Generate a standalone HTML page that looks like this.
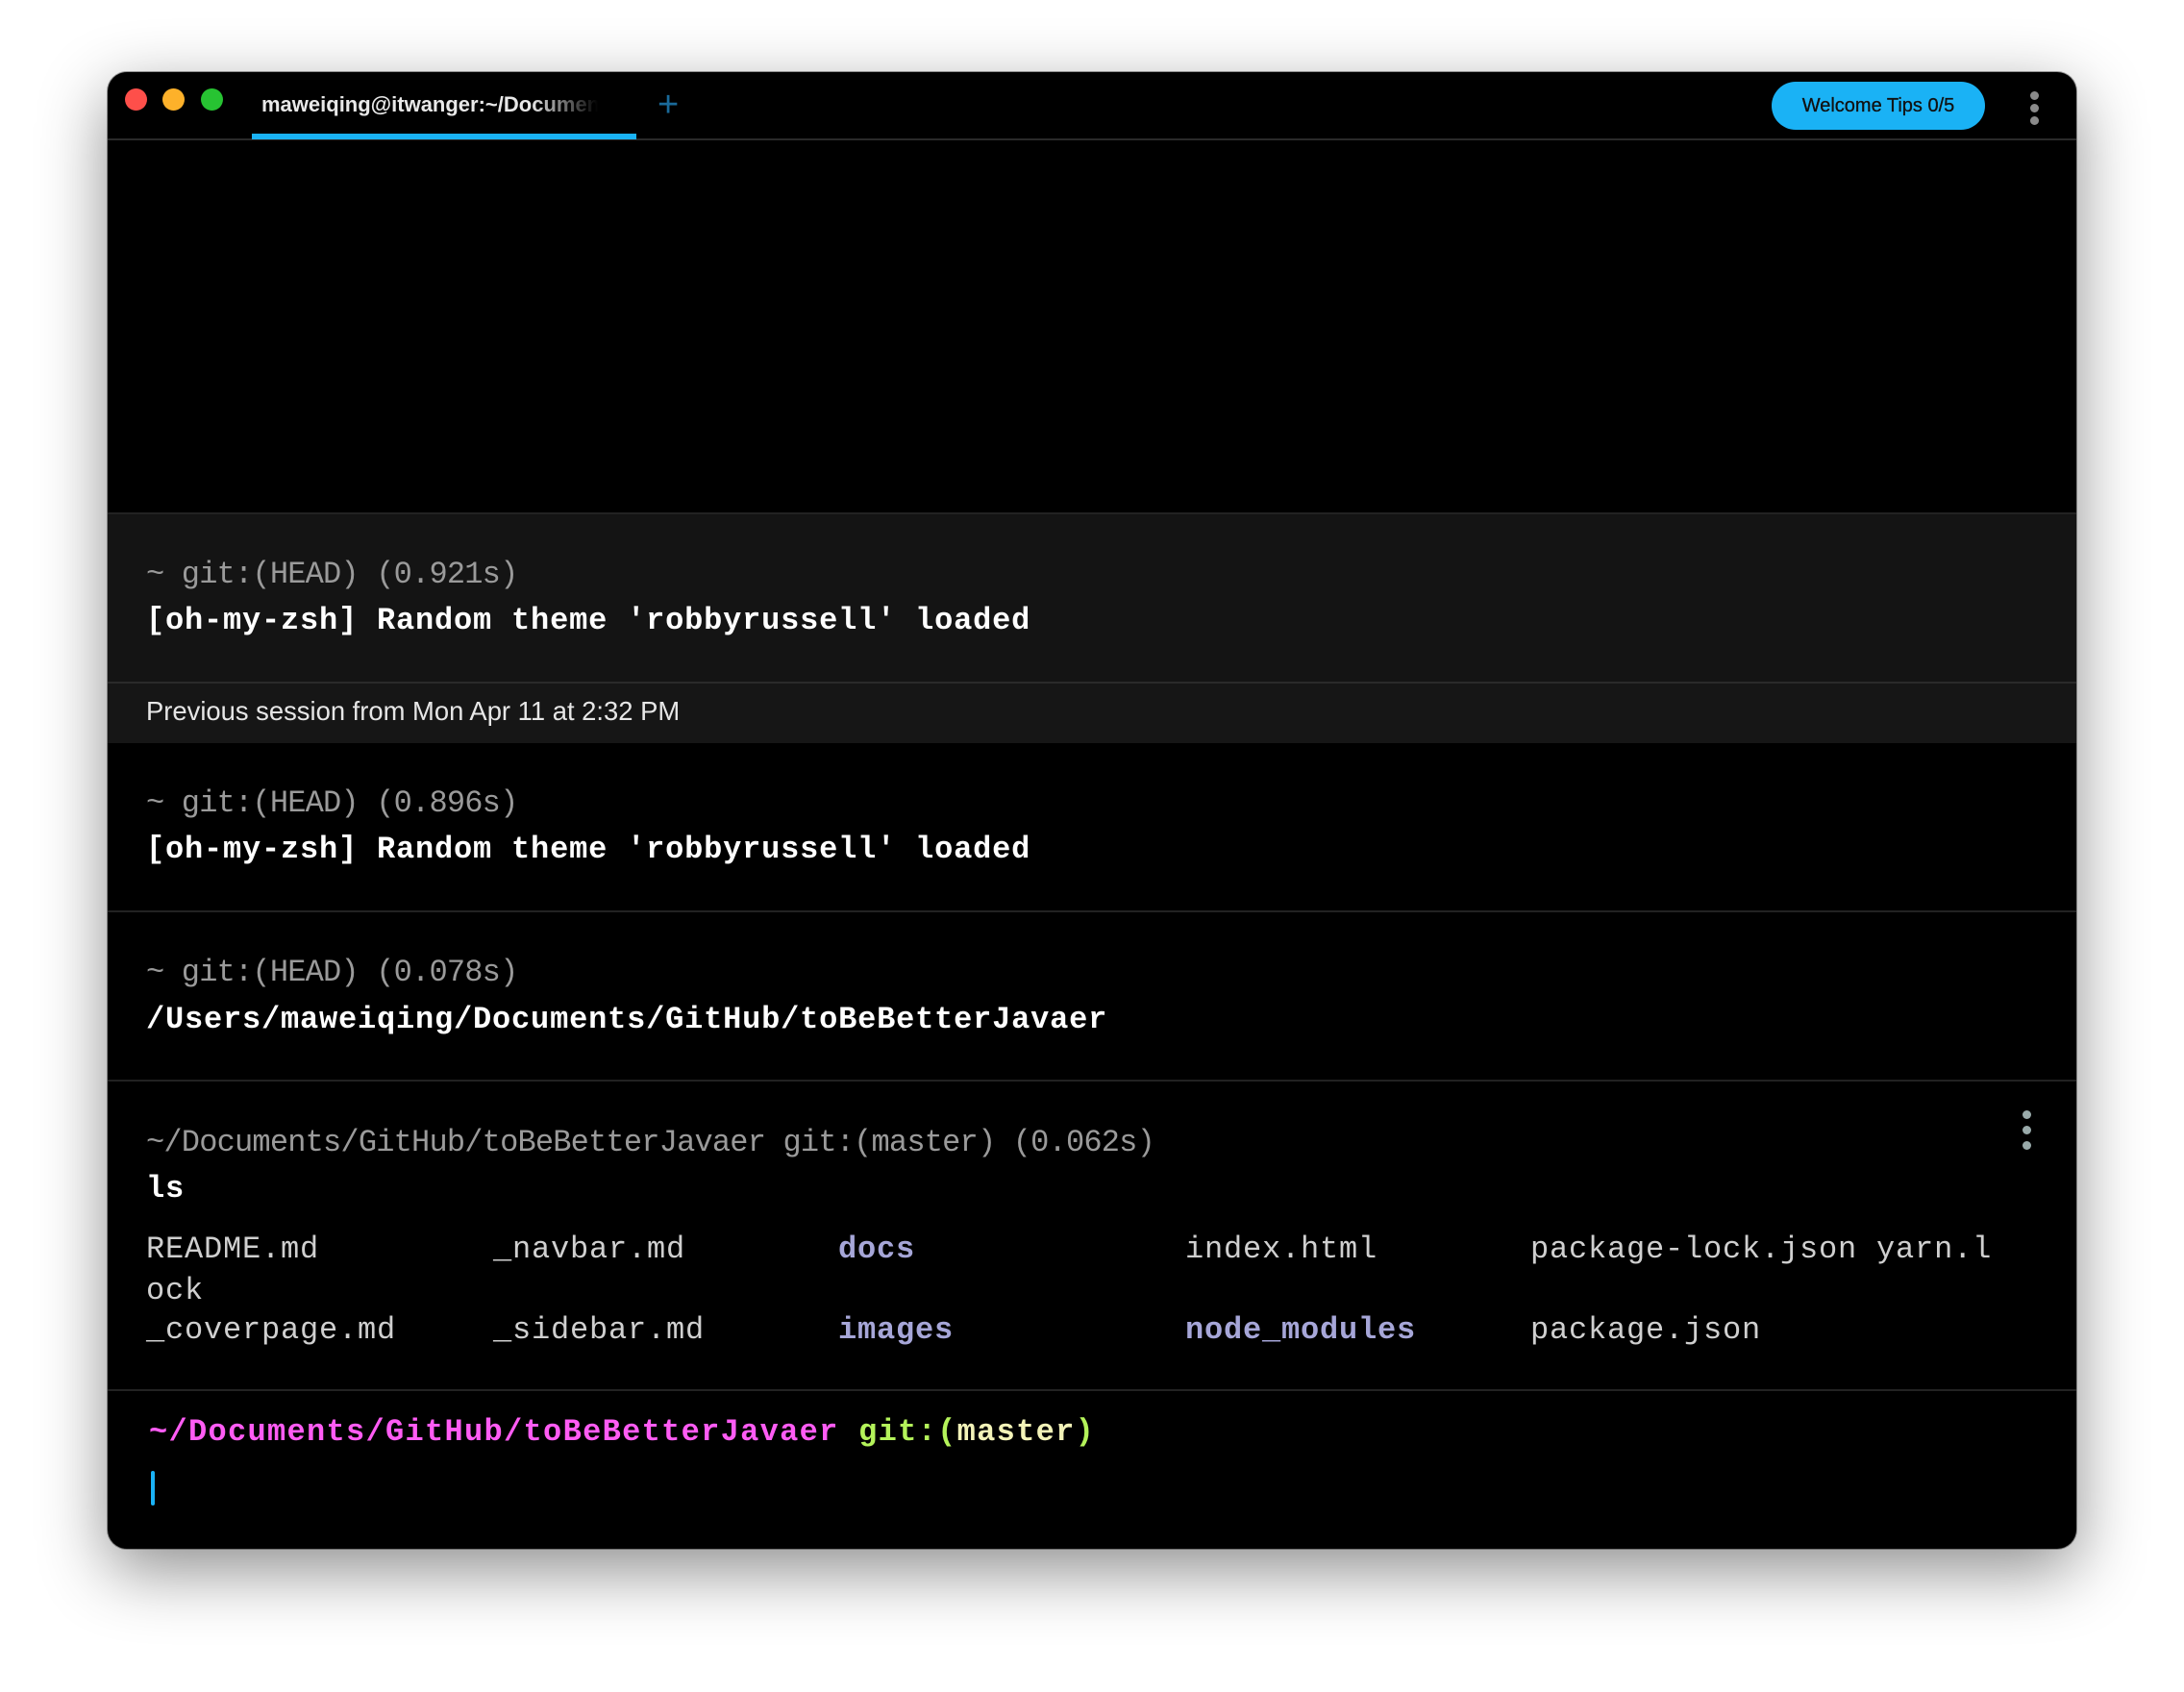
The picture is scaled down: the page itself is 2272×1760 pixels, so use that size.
<!DOCTYPE html>
<html><head><meta charset="utf-8"><style>
html,body{margin:0;padding:0;width:2272px;height:1760px;background:#fff;overflow:hidden}
.win{position:absolute;left:112px;top:75px;width:2048px;height:1536px;background:#000;border-radius:20px;overflow:hidden;box-shadow:0 22px 70px rgba(0,0,0,.45),0 0 0 1px rgba(0,0,0,.35)}
.tb{position:absolute;left:0;top:0;width:100%;height:69px;border-bottom:2px solid #2a2a2a}
.dot{position:absolute;top:17px;width:23px;height:23px;border-radius:50%}
.tab{position:absolute;left:160px;top:21px;font:bold 22px "Liberation Sans",sans-serif;color:#e8e8e8;white-space:nowrap;width:350px;overflow:hidden;-webkit-mask-image:linear-gradient(90deg,#000 80%,transparent 100%)}
.ul{position:absolute;left:150px;top:64px;width:400px;height:6px;background:#1ab2f5}
.plus{position:absolute;left:572px;top:13px;font:38px "Liberation Sans",sans-serif;color:#1a6a9a}
.btn{position:absolute;left:1731px;top:10px;width:222px;height:50px;border-radius:25px;background:#1ab2f5;font:20px "Liberation Sans",sans-serif;color:#111;text-align:center;line-height:50px;-webkit-text-stroke:0.3px #111}
.kd{position:absolute;width:9px;height:9px;border-radius:50%;background:#8a8a8a}
.blk{position:absolute;left:0;width:100%;border-top:2px solid #222}
.m{position:absolute;left:40px;font-family:"Liberation Mono",monospace;font-size:32px;letter-spacing:-0.8px;line-height:48px;white-space:pre}
.g{color:#9a9a9a}.w{color:#fff;font-weight:bold;letter-spacing:0.8px}.l{color:#cfcfcf;letter-spacing:0.8px}.p{color:#a6a6d8;font-weight:bold;letter-spacing:0.8px}
</style></head><body>
<div class="win">
 <div class="tb">
  <div class="dot" style="left:18px;background:#fe4f4a"></div>
  <div class="dot" style="left:57px;background:#fdb12a"></div>
  <div class="dot" style="left:97px;background:#27c332"></div>
  <div class="tab">maweiqing@itwanger:~/Documents</div>
  <div class="ul"></div>
  <div class="plus">+</div>
  <div class="btn">Welcome Tips 0/5</div>
  <div class="kd" style="left:2000px;top:20px"></div>
  <div class="kd" style="left:2000px;top:33px"></div>
  <div class="kd" style="left:2000px;top:46px"></div>
 </div>
 <div class="blk" style="top:458px;height:174px;background:#141414">
  <div class="m g" style="top:39px">~ git:(HEAD) (0.921s)</div>
  <div class="m w" style="top:87px">[oh-my-zsh] Random theme 'robbyrussell' loaded</div>
 </div>
 <div class="blk" style="top:634px;height:62px;background:#161616;border-top-color:#2a2a2a">
  <div style="position:absolute;left:40px;top:13px;font:27.4px 'Liberation Sans',sans-serif;color:#e6e6e6">Previous session from Mon Apr 11 at 2:32 PM</div>
 </div>
 <div class="blk" style="top:697px;height:174px;border-top:none">
  <div class="m g" style="top:40px">~ git:(HEAD) (0.896s)</div>
  <div class="m w" style="top:88px">[oh-my-zsh] Random theme 'robbyrussell' loaded</div>
 </div>
 <div class="blk" style="top:872px;height:174px">
  <div class="m g" style="top:39px">~ git:(HEAD) (0.078s)</div>
  <div class="m w" style="top:88px">/Users/maweiqing/Documents/GitHub/toBeBetterJavaer</div>
 </div>
 <div class="blk" style="top:1048px;height:320px">
  <div class="m g" style="top:40px">~/Documents/GitHub/toBeBetterJavaer git:(master) (0.062s)</div>
  <div class="m w" style="top:88px">ls</div>
  <div class="m l" style="top:151px">README.md</div>
  <div class="m l" style="left:401px;top:151px">_navbar.md</div>
  <div class="m p" style="left:760px;top:151px">docs</div>
  <div class="m l" style="left:1121px;top:151px">index.html</div>
  <div class="m l" style="left:1480px;top:151px">package-lock.json yarn.l</div>
  <div class="m l" style="top:194px">ock</div>
  <div class="m l" style="top:235px">_coverpage.md</div>
  <div class="m l" style="left:401px;top:235px">_sidebar.md</div>
  <div class="m p" style="left:760px;top:235px">images</div>
  <div class="m p" style="left:1121px;top:235px">node_modules</div>
  <div class="m l" style="left:1480px;top:235px">package.json</div>
  <div class="kd" style="left:1992px;top:30px;background:#9aa"></div>
  <div class="kd" style="left:1992px;top:46px;background:#9aa"></div>
  <div class="kd" style="left:1992px;top:62px;background:#9aa"></div>
 </div>
 <div class="blk" style="top:1370px;height:166px">
  <div class="m" style="left:43px;top:19px;font-weight:bold;letter-spacing:1.3px"><span style="color:#ff5cf4">~/Documents/GitHub/toBeBetterJavaer</span> <span style="color:#b4f35a">git:(</span><span style="color:#f3f3b8">master</span><span style="color:#b4f35a">)</span></div>
  <div style="position:absolute;left:45px;top:83px;width:4px;height:36px;background:#1ab2f5;border-radius:2px"></div>
 </div>
</div>
</body></html>
